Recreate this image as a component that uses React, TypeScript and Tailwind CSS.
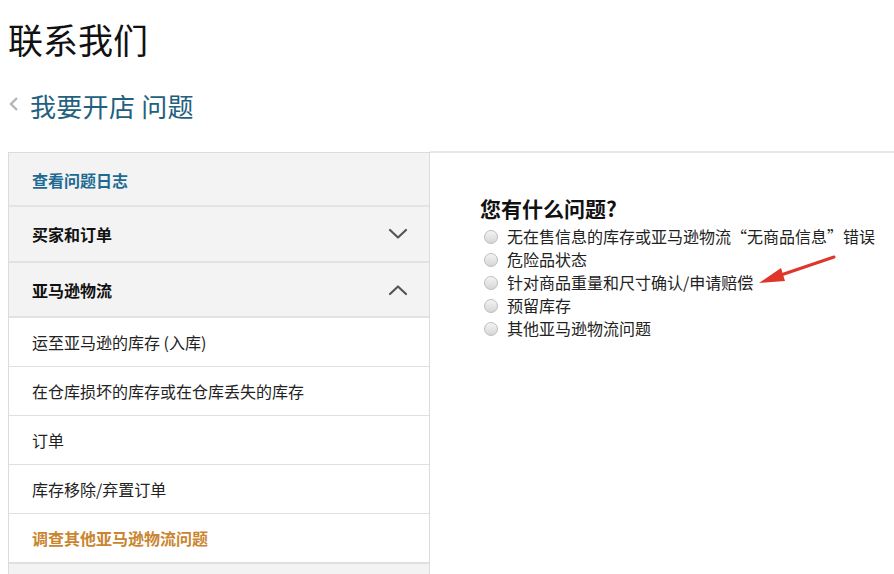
import React from "react";

const font = { fontFamily: '"Noto Sans CJK SC", "Noto Sans", sans-serif' };

function Chevron({ up }: { up?: boolean }) {
  return (
    <svg width="20" height="12" viewBox="0 0 20 12" fill="none">
      {up ? (
        <path d="M2 10 L10 2.5 L18 10" stroke="#555" strokeWidth="2.2" strokeLinecap="round" strokeLinejoin="round" />
      ) : (
        <path d="M2 2 L10 9.5 L18 2" stroke="#555" strokeWidth="2.2" strokeLinecap="round" strokeLinejoin="round" />
      )}
    </svg>
  );
}

export default function App() {
  const subs = ["运至亚马逊的库存 (入库)", "在仓库损坏的库存或在仓库丢失的库存", "订单", "库存移除/弃置订单"];
  const opts = [
    "无在售信息的库存或亚马逊物流“无商品信息”错误",
    "危险品状态",
    "针对商品重量和尺寸确认/申请赔偿",
    "预留库存",
    "其他亚马逊物流问题",
  ];
  return (
    <div className="w-[894px] h-[574px] overflow-hidden bg-white relative text-[#111]" style={font}>
      <div className="pl-[8px] pt-[17px]">
        <h1 className="text-[35px] leading-[44px] font-normal text-[#111]">联系我们</h1>
        <div className="flex items-center mt-[28px] h-[34px]">
          <svg width="12" height="16" viewBox="0 0 12 16" className="mr-[10px] mt-[-4px]">
            <path d="M9 2 L3 8 L9 14" stroke="#b5b5b5" strokeWidth="2.4" fill="none" />
          </svg>
          <span className="text-[26px] leading-[34px] text-[#23607e] tracking-[0.3px]">我要开店 问题</span>
        </div>
      </div>
      <div className="flex mt-[29px]">
        <div className="ml-[8px] w-[422px] border-l border-r border-t border-[#dcdcdc] flex flex-col">
          <div className="h-[54px] bg-[#f3f3f3] border-b-2 border-[#e4e4e4] flex items-center pl-[23px] pt-[2px]">
            <span className="text-[16px] font-bold text-[#1d6a93]">查看问题日志</span>
          </div>
          <div className="h-[56px] bg-[#f3f3f3] border-b-2 border-[#e2e2e2] flex items-center justify-between pl-[23px] pr-[21px]">
            <span className="text-[16px] font-bold text-[#111]">买家和订单</span>
            <Chevron />
          </div>
          <div className="h-[55px] bg-[#f3f3f3] border-b-2 border-[#e2e2e2] flex items-center justify-between pl-[23px] pr-[21px]">
            <span className="text-[16px] font-bold text-[#111]">亚马逊物流</span>
            <Chevron up />
          </div>
          {subs.map((s) => (
            <div key={s} className="h-[49px] bg-white border-b border-[#e0e0e0] flex items-center pl-[23px]">
              <span className="text-[16px] text-[#222]">{s}</span>
            </div>
          ))}
          <div className="h-[50px] bg-white border-b-2 border-[#e0e0e0] flex items-center pl-[23px]">
            <span className="text-[16px] font-bold text-[#c98530]">调查其他亚马逊物流问题</span>
          </div>
          <div className="h-[20px] bg-[#f3f3f3]" />
        </div>
        <div className="flex-1">
          <div className="border-t-2 border-[#e6e6e6] -mt-[1px]" />
          <div className="pl-[50px] pt-[41px]">
            <h2 className="text-[21px] leading-[28px] font-bold text-[#111]">您有什么问题?</h2>
            <div className="flex flex-col mt-[3px]">
              {opts.map((o) => (
                <div key={o} className="flex items-center h-[23px]">
                  <span className="w-[14px] h-[14px] rounded-full border border-[#bdbdbd] bg-gradient-to-b from-[#f4f4f4] to-[#d6d6d6] ml-[4px] mr-[9px]" />
                  <span className="text-[16px] leading-[23px] text-[#222]">{o}</span>
                </div>
              ))}
            </div>
          </div>
        </div>
      </div>
      <svg className="absolute left-0 top-0 pointer-events-none" width="894" height="574">
        <path d="M834 257 L778 276" stroke="#e0352b" strokeWidth="3" strokeLinecap="round" />
        <path d="M759 283 L781 268 L785 281 Z" fill="#e0352b" />
      </svg>
    </div>
  );
}
